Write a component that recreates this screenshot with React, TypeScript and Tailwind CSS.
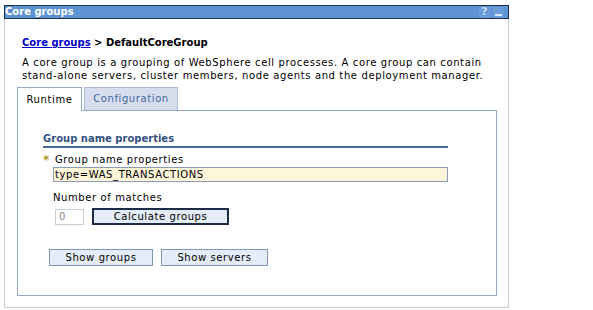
import React from "react";

export default function App() {
  const font = { fontFamily: '"DejaVu Sans", Verdana, sans-serif' };
  return (
    <div className="w-[593px] h-[310px] bg-white overflow-hidden text-[10px] leading-[12px] text-black tracking-[0.6px]" style={font}>
      <div className="ml-[4px] mt-[5px] w-[505px]">
        {/* title bar */}
        <div className="h-[14px] bg-[#5d92d3] border border-[#1f2f50] flex items-center justify-between pl-0 pr-[4px]">
          <span className="text-white font-bold text-[10px] leading-[12px] tracking-normal">Core groups</span>
          <div className="flex items-center gap-[3px]">
            <span className="w-[11px] h-[11px] flex items-center justify-center text-[#cfe0f5] font-bold text-[10px] leading-[10px] tracking-normal bg-[#6a9cd9]">?</span>
            <span className="w-[11px] h-[11px] flex items-end justify-center pb-[2px] bg-[#6a9cd9]">
              <span className="block w-[7px] h-[2px] bg-[#dbe8f7]"></span>
            </span>
          </div>
        </div>
        {/* body */}
        <div className="border-x border-b border-[#c9cdd3] h-[289px] pl-[12px] pt-[18px]">
          <div className="ml-[5px] font-bold tracking-normal">
            <span className="text-[#0000cc] underline">Core groups</span>
            <span> &gt; DefaultCoreGroup</span>
          </div>
          <div className="ml-[5px] mt-[8px] leading-[12.5px] whitespace-nowrap tracking-[0.62px]">
            A core group is a grouping of WebSphere cell processes. A core group can contain
            <br />
            stand-alone servers, cluster members, node agents and the deployment manager.
          </div>
          {/* tabs */}
          <div className="mt-[5px] flex items-end h-[23px]">
            <div className="h-[24px] w-[65px] border border-b-0 border-[#98a9c6] bg-white flex items-center justify-center relative z-10 mb-[-1px]">
              Runtime
            </div>
            <div className="ml-[2px] h-[23px] w-[94px] border border-b-0 border-[#a9b8d3] bg-[#d6deee] text-[#4466a0] flex items-center justify-center">
              Configuration
            </div>
          </div>
          <div className="w-[480px] h-[186px] border border-[#98a9c6] pl-[25px] pt-[22px]">
            <div className="w-[405px] border-b-2 border-[#4d6a96] pb-[1px] font-bold text-[#34517f] tracking-normal">
              Group name properties
            </div>
            <div className="mt-[6px] flex items-center">
              <span className="text-[#b59a2b] w-[12px] text-[12px] leading-[12px] font-bold tracking-normal">*</span>
              <span>Group name properties</span>
            </div>
            <div className="ml-[10px] mt-[1px] w-[395px] h-[15px] border border-[#8c9cb7] bg-[#fdf6da] flex items-center pl-[1px]">
              type=WAS_TRANSACTIONS
            </div>
            <div className="ml-[10px] mt-[10px]">Number of matches</div>
            <div className="ml-[12px] mt-[4px] flex items-center">
              <div className="w-[29px] h-[16px] border border-[#c8ccd4] bg-white text-[#8a8a8a] flex items-center pl-[3px]">0</div>
              <div className="ml-[8px] w-[137px] h-[17px] border-2 border-[#1c2b48] bg-[#e4ecf8] flex items-center justify-center">
                Calculate groups
              </div>
            </div>
            <div className="ml-[6px] mt-[24px] flex items-center gap-[8px]">
              <div className="w-[104px] h-[17px] border border-[#8096ba] bg-[#e4ecf8] flex items-center justify-center">
                Show groups
              </div>
              <div className="w-[107px] h-[17px] border border-[#8096ba] bg-[#e4ecf8] flex items-center justify-center">
                Show servers
              </div>
            </div>
          </div>
        </div>
      </div>
    </div>
  );
}
